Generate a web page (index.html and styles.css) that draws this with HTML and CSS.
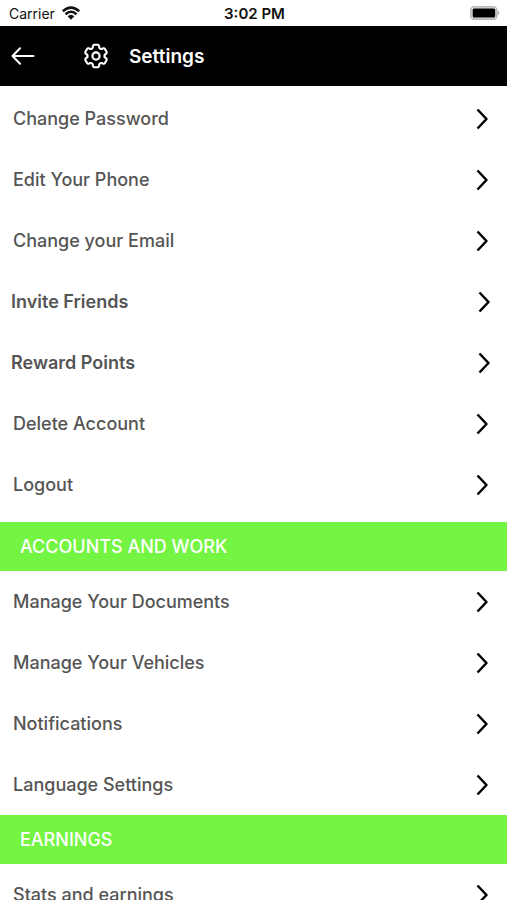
FILE: index.html
```html
<!DOCTYPE html>
<html lang="en">
<head>
<meta charset="utf-8">
<meta name="viewport" content="width=device-width, initial-scale=1">
<title>Settings</title>
<link rel="stylesheet" href="styles.css">
</head>
<body>
<svg class="sprite" aria-hidden="true">
  <symbol id="chevron" viewBox="0 0 14 24"><path d="M2.500 2.500L11.500 12L2.500 21.500" fill="none" stroke="currentColor" stroke-width="2.500" stroke-linejoin="round"/></symbol>
</svg>
<div class="app">
  <div class="status">
    <div class="status-side">
      <span>Carrier</span>
      <svg class="wifi" viewBox="0 0 18 14" aria-hidden="true">
        <path d="M0.800 5.200Q9-2 17.200 5.200M3.500 8.200Q9 3.300 14.500 8.200" fill="none" stroke="currentColor" stroke-width="2.500"/>
        <path d="M5.600 10.300Q9 7.300 12.400 10.300L9 13.700Z" fill="currentColor"/>
      </svg>
    </div>
    <time class="status-time">3:02 PM</time>
    <div class="status-side status-right">
      <svg class="battery" viewBox="0 0 30 14" aria-hidden="true">
        <rect x="0.800" y="0.800" width="26" height="12.400" rx="3.500" fill="#ddd" stroke="#b8b8b8" stroke-width="1.500"/>
        <rect x="2.700" y="2.500" width="22.500" height="9" rx="1.500" fill="#000"/>
        <path d="M27.800 4.500Q30.500 7 27.800 9.500Z" fill="#a5a5a5"/>
      </svg>
    </div>
  </div>
  <header class="header">
    <button class="back" type="button" aria-label="Back">
      <svg viewBox="0 0 24 18" aria-hidden="true"><path d="M22.500 9H1.500M9 1.200L1.500 9L9 16.800" fill="none" stroke="currentColor" stroke-width="2" stroke-linecap="round" stroke-linejoin="round"/></svg>
    </button>
    <svg class="gear" viewBox="0 0 24 24" fill="none" stroke="currentColor" stroke-width="1.700" stroke-linejoin="round" aria-hidden="true">
      <path d="M9.594 3.940c.09-.542.56-.94 1.110-.94h2.593c.55 0 1.020.398 1.110.94l.213 1.281c.063.374.313.686.645.87.074.04.147.083.22.127.325.196.72.257 1.075.124l1.217-.456a1.125 1.125 0 0 1 1.370.49l1.296 2.247a1.125 1.125 0 0 1-.26 1.431l-1.003.827c-.293.241-.438.613-.43.992a7.723 7.723 0 0 1 0 .255c-.008.378.137.75.43.991l1.004.827c.424.35.534.955.26 1.430l-1.298 2.247a1.125 1.125 0 0 1-1.369.491l-1.217-.456c-.355-.133-.75-.072-1.076.124a6.470 6.470 0 0 1-.22.128c-.331.183-.581.495-.644.869l-.213 1.281c-.09.543-.56.94-1.110.94h-2.594c-.55 0-1.019-.398-1.110-.94l-.213-1.281c-.062-.374-.312-.686-.644-.87a6.520 6.520 0 0 1-.22-.127c-.325-.196-.72-.257-1.076-.124l-1.217.456a1.125 1.125 0 0 1-1.369-.49l-1.297-2.247a1.125 1.125 0 0 1 .26-1.431l1.004-.827c.292-.24.437-.613.43-.991a6.932 6.932 0 0 1 0-.255c.007-.38-.138-.751-.43-.992l-1.004-.827a1.125 1.125 0 0 1-.26-1.430l1.297-2.247a1.125 1.125 0 0 1 1.370-.491l1.216.456c.356.133.751.072 1.076-.124.072-.044.146-.086.22-.128.332-.183.582-.495.644-.869l.214-1.280Z"/>
      <circle cx="12" cy="12" r="2.900"/>
    </svg>
    <h1 class="title">Settings</h1>
  </header>
  <main class="content">
    <ul class="list list-first">
      <li><a class="row" href="#password">Change Password<svg class="chevron" aria-hidden="true"><use href="#chevron"/></svg></a></li>
      <li><a class="row" href="#phone">Edit Your Phone<svg class="chevron" aria-hidden="true"><use href="#chevron"/></svg></a></li>
      <li><a class="row" href="#email">Change your Email<svg class="chevron" aria-hidden="true"><use href="#chevron"/></svg></a></li>
      <li><a class="row row-wide" href="#invite">Invite Friends<svg class="chevron" aria-hidden="true"><use href="#chevron"/></svg></a></li>
      <li><a class="row row-wide" href="#rewards">Reward Points<svg class="chevron" aria-hidden="true"><use href="#chevron"/></svg></a></li>
      <li><a class="row" href="#delete">Delete Account<svg class="chevron" aria-hidden="true"><use href="#chevron"/></svg></a></li>
      <li><a class="row" href="#logout">Logout<svg class="chevron" aria-hidden="true"><use href="#chevron"/></svg></a></li>
    </ul>
    <h2 class="section">ACCOUNTS AND WORK</h2>
    <ul class="list">
      <li><a class="row" href="#documents">Manage Your Documents<svg class="chevron" aria-hidden="true"><use href="#chevron"/></svg></a></li>
      <li><a class="row" href="#vehicles">Manage Your Vehicles<svg class="chevron" aria-hidden="true"><use href="#chevron"/></svg></a></li>
      <li><a class="row" href="#notifications">Notifications<svg class="chevron" aria-hidden="true"><use href="#chevron"/></svg></a></li>
      <li><a class="row" href="#language">Language Settings<svg class="chevron" aria-hidden="true"><use href="#chevron"/></svg></a></li>
    </ul>
    <h2 class="section">EARNINGS</h2>
    <ul class="list">
      <li><a class="row" href="#stats">Stats and earnings<svg class="chevron" aria-hidden="true"><use href="#chevron"/></svg></a></li>
    </ul>
  </main>
</div>
</body>
</html>
```
FILE: styles.css
```css
* {
  box-sizing: border-box;
}

body {
  margin: 0;
  background: #fff;
  color: #555;
  font-family: Inter, "Liberation Sans", sans-serif;
}

.sprite {
  display: none;
}

.app {
  display: flex;
  flex-direction: column;
  height: 100vh;
}

.status {
  display: flex;
  align-items: center;
  flex: none;
  height: 26px;
  padding: 0 7px 0 9px;
  color: #111;
  font-size: 14px;
}

.status-side {
  display: flex;
  flex: 1;
  align-items: center;
  gap: 7px;
}

.status-right {
  justify-content: flex-end;
}

.status-time {
  font-size: 15px;
  font-weight: 600;
}

.wifi {
  width: 18px;
  height: 14px;
}

.battery {
  width: 30px;
  height: 14px;
}

.header {
  display: flex;
  align-items: center;
  flex: none;
  height: 60px;
  padding: 0 11px;
  background: #000;
  color: #fff;
}

.back {
  display: flex;
  margin: 0 46px 0 0;
  padding: 0;
  border: 0;
  background: none;
  color: inherit;
}

.back svg {
  width: 24px;
  height: 18px;
}

.gear {
  width: 30px;
  height: 30px;
  margin-right: 18px;
}

.title {
  margin: 0;
  font-size: 19px;
  font-weight: 600;
}

.content {
  flex: 1;
  min-height: 0;
  overflow-y: auto;
  scrollbar-width: none;
}

.list {
  margin: 0;
  padding: 0;
  list-style: none;
}

.list-first {
  padding: 2px 0 7px;
}

.row {
  display: flex;
  align-items: center;
  justify-content: space-between;
  height: 61px;
  padding: 0 18px 0 13px;
  color: inherit;
  font-size: 18px;
  font-weight: 500;
  text-decoration: none;
}

.row-wide {
  padding: 0 16px 0 11px;
  font-weight: 600;
}

.chevron {
  flex: none;
  width: 14px;
  height: 24px;
  color: #000;
}

.section {
  display: flex;
  align-items: center;
  height: 49px;
  margin: 0;
  padding: 0 20px;
  background: #74f543;
  color: #fff;
  font-size: 18px;
  font-weight: 500;
}
```
